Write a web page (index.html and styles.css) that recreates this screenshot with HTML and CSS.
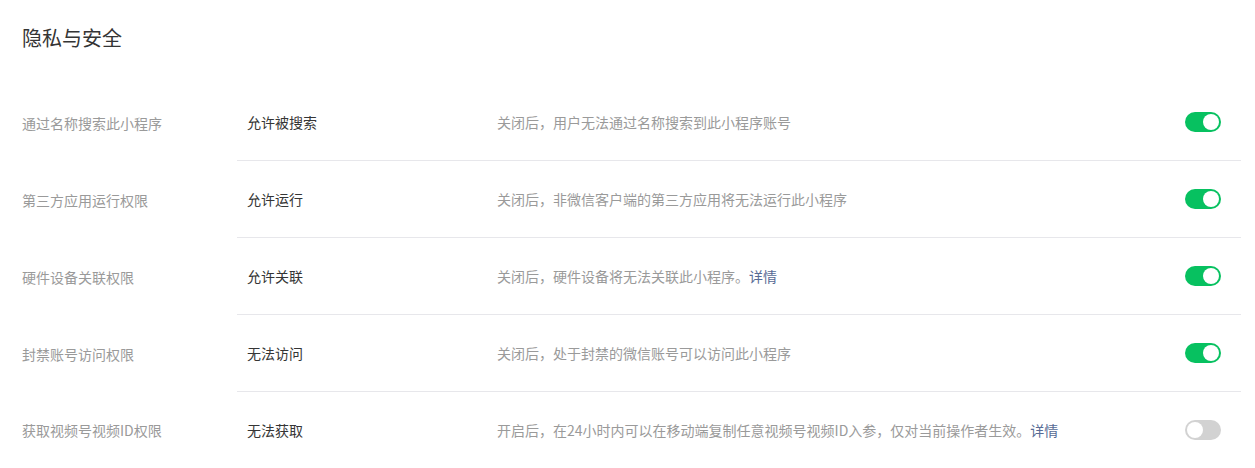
FILE: index.html
```html
<!DOCTYPE html>
<html lang="zh-CN">
<head>
<meta charset="utf-8">
<title>隐私与安全</title>
<link rel="stylesheet" href="styles.css">
</head>
<body>
<div class="page">
  <h2 class="title">隐私与安全</h2>
  <ul class="list">
    <li class="row">
      <div class="label">通过名称搜索此小程序</div>
      <div class="body">
        <div class="value">允许被搜索</div>
        <div class="desc">关闭后，用户无法通过名称搜索到此小程序账号</div>
        <span class="switch on"><span class="knob"></span></span>
      </div>
    </li>
    <li class="row">
      <div class="label">第三方应用运行权限</div>
      <div class="body">
        <div class="value">允许运行</div>
        <div class="desc">关闭后，非微信客户端的第三方应用将无法运行此小程序</div>
        <span class="switch on"><span class="knob"></span></span>
      </div>
    </li>
    <li class="row">
      <div class="label">硬件设备关联权限</div>
      <div class="body">
        <div class="value">允许关联</div>
        <div class="desc">关闭后，硬件设备将无法关联此小程序。<a class="link" href="#">详情</a></div>
        <span class="switch on"><span class="knob"></span></span>
      </div>
    </li>
    <li class="row">
      <div class="label">封禁账号访问权限</div>
      <div class="body">
        <div class="value">无法访问</div>
        <div class="desc">关闭后，处于封禁的微信账号可以访问此小程序</div>
        <span class="switch on"><span class="knob"></span></span>
      </div>
    </li>
    <li class="row">
      <div class="label">获取视频号视频ID权限</div>
      <div class="body">
        <div class="value">无法获取</div>
        <div class="desc">开启后，在24小时内可以在移动端复制任意视频号视频ID入参，仅对当前操作者生效。<a class="link" href="#">详情</a></div>
        <span class="switch off"><span class="knob"></span></span>
      </div>
    </li>
  </ul>
</div>
</body>
</html>
```

FILE: styles.css
```css
* { box-sizing: border-box; }
html, body { margin: 0; padding: 0; background: #fff; }
body {
  font-family: "Noto Sans CJK SC", "Noto Sans", "Liberation Sans", sans-serif;
  font-size: 14px;
  color: #353535;
}
.page { padding: 24px 14px 0 22px; }
.title {
  margin: 0;
  font-size: 20px;
  font-weight: 400;
  line-height: 28px;
  color: #353535;
}
.list { list-style: none; margin: 32px 0 0; padding: 0; }
.row { display: flex; align-items: stretch; }
.label {
  width: 215px;
  flex: none;
  display: flex;
  align-items: center;
  color: #9a9a9a;
  line-height: 20px;
}
.body {
  flex: 1;
  display: flex;
  align-items: center;
  height: 77px;
  padding: 0 20px 0 10px;
  border-bottom: 1px solid #e7e7eb;
  line-height: 20px;
}
.row:last-child .body { border-bottom: none; height: 76px; }
.value { width: 250px; flex: none; color: #353535; }
.desc { flex: 1; color: #9a9a9a; }
.link { color: #576b95; text-decoration: none; }
.switch {
  flex: none;
  width: 36px;
  height: 20px;
  border-radius: 10px;
  padding: 2px;
  display: flex;
}
.switch.on { background: #07c160; justify-content: flex-end; }
.switch.off { background: #d2d2d2; justify-content: flex-start; }
.knob {
  width: 16px;
  height: 16px;
  border-radius: 50%;
  background: #fff;
}
```
